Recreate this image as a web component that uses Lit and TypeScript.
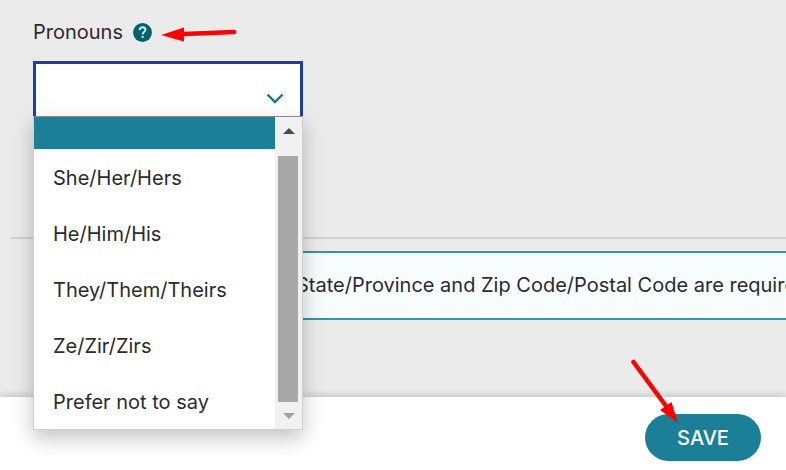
import { LitElement, html, css } from "lit";
import { customElement, state } from "lit/decorators.js";
import { classMap } from "lit/directives/class-map.js";

const PRONOUNS = [
  "",
  "She/Her/Hers",
  "He/Him/His",
  "They/Them/Theirs",
  "Ze/Zir/Zirs",
  "Prefer not to say",
];

@customElement("pronoun-field")
export class PronounField extends LitElement {
  @state() private value = "";

  static styles = css`
    :host {
      display: block;
      color: #2b2b2b;
    }
    .label-row {
      display: flex;
      align-items: center;
      gap: 10px;
      height: 24px;
      margin-bottom: 17px;
    }
    .help {
      width: 19px;
      height: 19px;
      padding: 0;
      border: 0;
      background: none;
      display: block;
    }
    .help svg,
    .callout,
    .chevron,
    .step svg {
      display: block;
    }
    .callout {
      overflow: visible;
    }
    .control {
      position: relative;
      width: 270px;
    }
    select {
      appearance: none;
      box-sizing: border-box;
      display: block;
      width: 100%;
      height: 74px;
      padding: 0 48px 0 20px;
      border: 3px solid #1f3fa0;
      border-radius: 0;
      background: #fff;
      color: inherit;
      font: inherit;
      outline: 0;
    }
    .chevron {
      position: absolute;
      right: 19px;
      top: 32px;
      pointer-events: none;
    }
    .popup {
      position: absolute;
      z-index: 2;
      top: 55px;
      left: 0;
      right: 0;
      box-sizing: border-box;
      display: flex;
      border: 1px solid #cfcfcf;
      border-top-color: #8b8b8b;
      background: #fff;
      box-shadow: 0 8px 20px rgba(0, 0, 0, 0.24);
    }
    .options {
      flex: 1;
      margin: 0;
      padding: 0;
      list-style: none;
    }
    .option {
      display: flex;
      align-items: center;
      box-sizing: border-box;
      height: 56px;
      padding: 2px 19px 0;
      white-space: nowrap;
    }
    .blank {
      height: 32px;
    }
    .active {
      background: #1b7f98;
      color: #fff;
    }
    .scrollbar {
      display: flex;
      flex-direction: column;
      width: 27px;
      background: #f1f1f1;
    }
    .step {
      display: flex;
      align-items: center;
      justify-content: center;
      width: 100%;
      height: 27px;
      padding: 0;
      border: 0;
      background: none;
    }
    .thumb {
      flex: 1;
      margin: 12px 4px 0 3px;
      background: #a8a8a8;
    }
  `;

  render() {
    return html`
      <div class="label-row">
        <label for="pronouns">Pronouns</label>
        <button class="help" type="button" aria-label="Help with pronouns">
          <svg width="19" height="19" viewBox="0 0 19 19">
            <circle cx="9.5" cy="9.5" r="9.4" fill="#05616f" />
            <path
              d="M6.6 7.2C6.6 5.3 7.8 4.2 9.6 4.2S12.5 5.3 12.5 6.8C12.5 8.7 9.6 8.9 9.6 11.5"
              fill="none" stroke="#dcecee" stroke-width="1.9" />
            <rect x="8.6" y="13" width="2" height="2" fill="#dcecee" />
          </svg>
        </button>
        <svg class="callout" width="75" height="16" viewBox="0 0 75 16" aria-hidden="true">
          <path d="M72 8 L22 10" stroke="#f00" stroke-width="4.6" stroke-linecap="round" />
          <path d="M-1 11 L22 3.500 V17.500 Z" fill="#f00" />
        </svg>
      </div>
      <div class="control">
        <select id="pronouns" .value=${this.value}
          @change=${(e: Event) => (this.value = (e.target as HTMLSelectElement).value)}>
          ${PRONOUNS.map((p) => html`<option value=${p}>${p}</option>`)}
        </select>
        <svg class="chevron" width="18" height="11" viewBox="0 0 18 11" aria-hidden="true">
          <path d="M1.5 1.5 L9 9 L16.5 1.5" fill="none" stroke="#157486" stroke-width="2.4" />
        </svg>
        <div class="popup">
          <ul class="options" role="listbox" aria-label="Pronouns">
            ${PRONOUNS.map(
              (p) => html`<li role="option"
                aria-selected=${p === this.value ? "true" : "false"}
                class=${classMap({ option: true, blank: p === "", active: p === this.value })}
                @click=${() => (this.value = p)}>${p}</li>`
            )}
          </ul>
          <div class="scrollbar">
            <button class="step" type="button" aria-label="Scroll up">
              <svg width="12" height="6" viewBox="0 0 12 6"><path d="M0 6L6 0L12 6Z" fill="#4b4b4b" /></svg>
            </button>
            <div class="thumb"></div>
            <button class="step" type="button" aria-label="Scroll down">
              <svg width="12" height="6" viewBox="0 0 12 6"><path d="M0 0H12L6 6Z" fill="#a0a0a0" /></svg>
            </button>
          </div>
        </div>
      </div>
    `;
  }
}

@customElement("app-root")
export class AppRoot extends LitElement {
  static styles = css`
    :host {
      display: flex;
      flex-direction: column;
      min-height: 100vh;
      overflow: hidden;
      background: #fff;
      color: #2b2b2b;
      font: 20px/24px Inter, "Open Sans", sans-serif;
    }
    .form {
      padding: 20px 0 77px;
      background: #ebebeb;
    }
    pronoun-field {
      margin-left: 33px;
    }
    .divider {
      height: 2px;
      margin: 102px 0 12px 10px;
      border: 0;
      background: #d2d2d2;
    }
    .notice {
      margin: 0 0 0 40px;
      padding: 20px 0 21px 254px;
      border: 2px solid #3a93a6;
      border-right: 0;
      background: #f7fcff;
      white-space: nowrap;
    }
    .actions {
      position: relative;
      display: flex;
      justify-content: flex-end;
      padding: 17px 25px 9px;
      background: #fff;
      box-shadow: 0 -2px 7px rgba(0, 0, 0, 0.16);
    }
    .save {
      width: 116px;
      height: 47px;
      padding: 0;
      border: 0;
      border-radius: 24px;
      background: #1b7f98;
      color: #fff;
      font: inherit;
      font-weight: 500;
    }
    .pointer {
      position: absolute;
      right: 107px;
      top: -38px;
      pointer-events: none;
    }
  `;

  render() {
    return html`
      <main class="form">
        <pronoun-field></pronoun-field>
        <hr class="divider" />
        <div class="notice">State/Province and Zip Code/Postal Code are required</div>
      </main>
      <footer class="actions">
        <button class="save" type="button">SAVE</button>
        <svg class="pointer" width="48" height="65" viewBox="0 0 48 65" aria-hidden="true">
          <path d="M2.5 3 L35 47" stroke="#f00" stroke-width="4.6" stroke-linecap="round" />
          <path d="M47 64 L29 51 L40.5 43 Z" fill="#f00" />
        </svg>
      </footer>
    `;
  }
}
